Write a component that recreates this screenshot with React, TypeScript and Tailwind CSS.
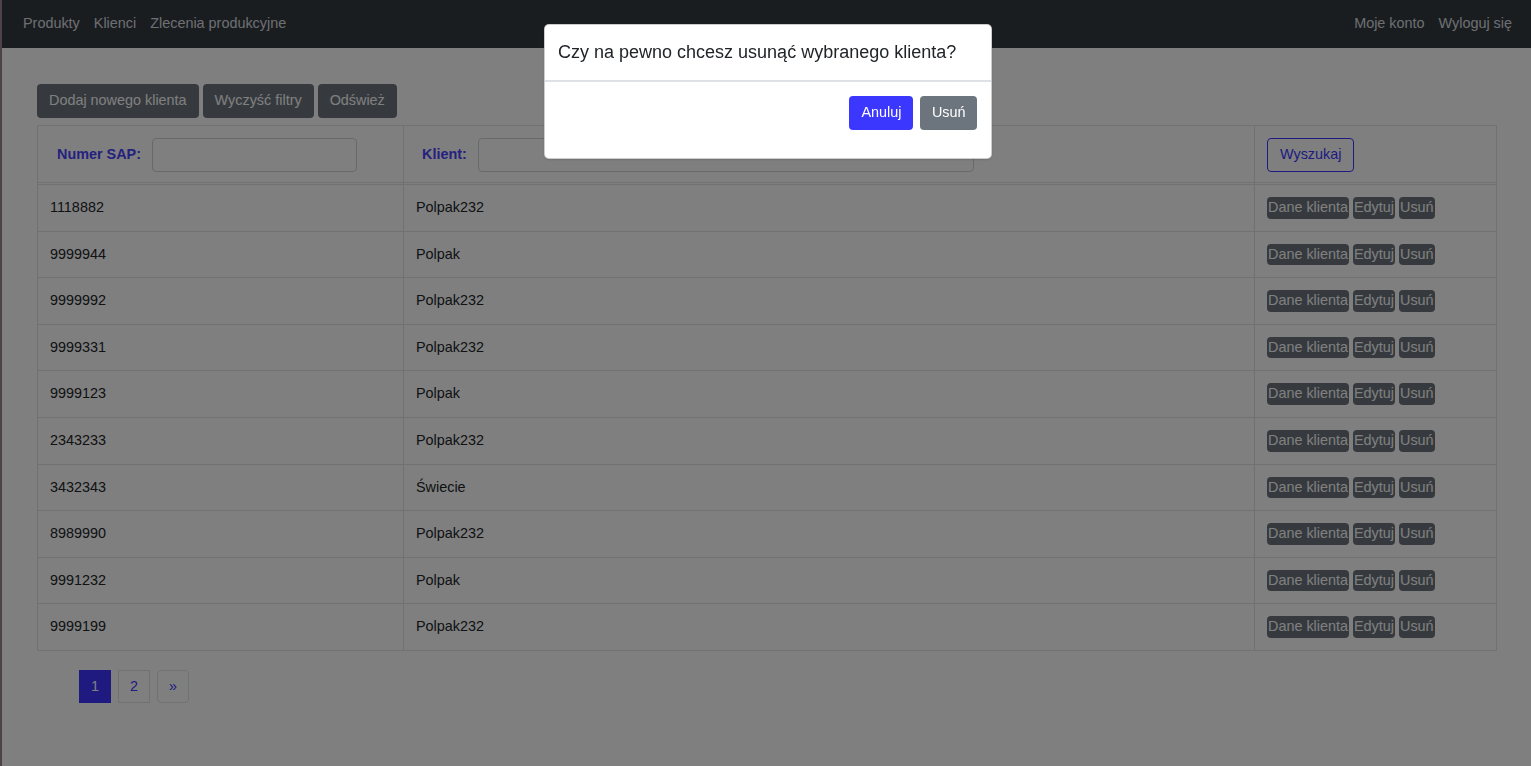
import { useState } from "react";

type Client = { sap: string; name: string };

const clients: Client[] = [
  { sap: "1118882", name: "Polpak232" },
  { sap: "9999944", name: "Polpak" },
  { sap: "9999992", name: "Polpak232" },
  { sap: "9999331", name: "Polpak232" },
  { sap: "9999123", name: "Polpak" },
  { sap: "2343233", name: "Polpak232" },
  { sap: "3432343", name: "Świecie" },
  { sap: "8989990", name: "Polpak232" },
  { sap: "9991232", name: "Polpak" },
  { sap: "9999199", name: "Polpak232" },
];

function Navbar() {
  return (
    <nav className="flex h-12 items-center justify-between bg-[#343a40] pl-[14px] pr-[12px] text-[#dcdfe2]">
      <div className="flex">
        <a className="px-[7px]">Produkty</a>
        <a className="px-[7px]">Klienci</a>
        <a className="px-[7px]">Zlecenia produkcyjne</a>
      </div>
      <div className="flex">
        <a className="px-[7px]">Moje konto</a>
        <a className="px-[7px]">Wyloguj się</a>
      </div>
    </nav>
  );
}

function ActionButton({ children }: { children: React.ReactNode }) {
  return (
    <button className="rounded-[4px] bg-[#6c757d] px-px leading-[1.5] text-white">{children}</button>
  );
}

function ClientTable() {
  const cell = "border-r border-b border-[#dee2e6] px-3 py-3 align-top text-left font-normal";
  const head = "border-r border-b-[3px] border-double border-[#dee2e6] px-3 pt-3 pb-[10px] text-left";
  return (
    <table className="ml-[35px] w-[1460px] table-fixed border-separate border-spacing-0 border-t border-l border-[#dee2e6] text-[#212529]">
      <colgroup>
        <col className="w-[366px]" />
        <col className="w-[851px]" />
        <col />
      </colgroup>
      <thead>
        <tr>
          <th className={head}>
            <div className="flex items-center gap-[11px] pl-[7px]">
              <label className="font-bold text-[#4a42ff]">Numer SAP:</label>
              <input className="h-[34px] w-[205px] rounded-[4px] border border-[#ced4da] bg-white" />
            </div>
          </th>
          <th className={head}>
            <div className="flex items-center gap-[11px] pl-[6px]">
              <label className="font-bold text-[#4a42ff]">Klient:</label>
              <input className="h-[34px] w-[496px] rounded-[4px] border border-[#ced4da] bg-white" />
            </div>
          </th>
          <th className={head}>
            <button className="h-[34px] rounded-[4px] border border-[#3c37ff] px-3 font-normal text-[#3c37ff]">
              Wyszukaj
            </button>
          </th>
        </tr>
      </thead>
      <tbody>
        {clients.map((c) => (
          <tr key={c.sap}>
            <td className={cell}>{c.sap}</td>
            <td className={cell}>{c.name}</td>
            <td className={cell}>
              <div className="flex gap-1">
                <ActionButton>Dane klienta</ActionButton>
                <ActionButton>Edytuj</ActionButton>
                <ActionButton>Usuń</ActionButton>
              </div>
            </td>
          </tr>
        ))}
      </tbody>
    </table>
  );
}

function Pagination() {
  return (
    <div className="mt-[19px] ml-[77px] flex gap-[7px]">
      <span className="flex h-[33px] w-8 items-center justify-center bg-[#3c35ff] text-white">1</span>
      <span className="flex h-[33px] w-8 items-center justify-center border border-[#dee2e6] text-[#3c37ff]">2</span>
      <span className="flex h-[33px] w-8 items-center justify-center rounded-[4px] border border-[#dee2e6] text-[#3c37ff]">
        »
      </span>
    </div>
  );
}

function ConfirmModal() {
  return (
    <div className="fixed top-6 left-[544px] w-[448px] rounded-[5px] border border-black/20 bg-white shadow-sm">
      <div className="flex h-[57px] items-center border-b-2 border-[#dee2e6] px-[13px] text-[18px] leading-[1.5] text-[#212529]">
        Czy na pewno chcesz usunąć wybranego klienta?
      </div>
      <div className="flex justify-end gap-[7px] pt-[14px] pr-[14px] pb-[28px]">
        <button className="h-[34px] rounded-[4px] bg-[#3c37ff] px-3 text-white">Anuluj</button>
        <button className="h-[34px] rounded-[4px] bg-[#6c757d] px-[11.5px] text-white">Usuń</button>
      </div>
    </div>
  );
}

export default function App() {
  const [open] = useState(true);
  return (
    <div className="min-h-screen border-l-2 border-[#9a878c] bg-white text-[14.4px] leading-[1.5] font-['Liberation_Sans',Arial,sans-serif]">
      <Navbar />
      <div className="mt-9 ml-[35px] flex gap-1">
        <button className="h-[34px] rounded-[4px] bg-[#6c757d] px-3 text-white">Dodaj nowego klienta</button>
        <button className="h-[34px] rounded-[4px] bg-[#6c757d] px-3 text-white">Wyczyść filtry</button>
        <button className="h-[34px] rounded-[4px] bg-[#6c757d] px-3 text-white">Odśwież</button>
      </div>
      <div className="mt-[7px]">
        <ClientTable />
      </div>
      <Pagination />
      {open && (
        <>
          <div className="fixed inset-0 bg-black/50" />
          <ConfirmModal />
        </>
      )}
    </div>
  );
}
